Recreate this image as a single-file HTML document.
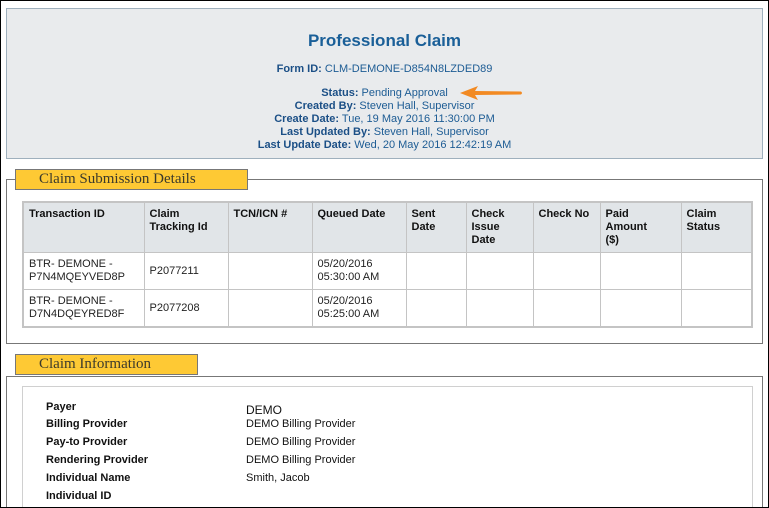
<!DOCTYPE html>
<html><head><meta charset="utf-8"><style>
*{margin:0;padding:0;box-sizing:border-box}
html,body{width:769px;height:508px;overflow:hidden;background:#fff}
body{font-family:"Liberation Sans",sans-serif;font-size:11px;position:relative}
.frame{position:absolute;left:0;top:0;width:769px;height:508px;border:1px solid #000;z-index:5;pointer-events:none}
.hdr{position:absolute;left:6px;top:8px;width:757px;height:151px;background:#e9ebed;border:1px solid #9fb0bd;color:#1d5c94;text-align:center}
.hdr h1{position:absolute;top:22px;width:100%;font-size:17px;font-weight:bold;color:#1a5f98}
.hdr .l{position:absolute;width:100%;line-height:13px}
.hdr b{color:#1b4f86}
.sec{position:absolute;left:6px;width:757px;border:1px solid #777;background:#fff}
.leg{position:absolute;background:#fec934;border:1px solid #777;font-family:"Liberation Serif",serif;font-size:15px;color:#3c3a2c;padding-left:23px;line-height:19px}
table{position:absolute;left:22px;top:201px;width:729px;table-layout:fixed;border-collapse:collapse;border:2px solid #c4c4c4}
td,th{border:1px solid #c4c4c4;vertical-align:top;text-align:left;padding:5px 5px;line-height:13px;color:#111;overflow:hidden}
th{background:#e1e5e8;font-weight:bold;height:49px}
td{height:37px;color:#222}
.ci{position:absolute;left:22px;top:386px;width:731px;height:130px;border:1px solid #d0d0d0}
.r{position:absolute;left:46px;font-weight:bold;color:#111}
.v{position:absolute;left:246px;color:#111}
</style></head><body>
<div class="frame"></div>
<div class="hdr">
<h1>Professional Claim</h1>
<div class="l" style="top:54px"><b>Form ID:</b> CLM-DEMONE-D854N8LZDED89</div>
<div class="l" style="top:78px"><b>Status:</b> Pending Approval</div>
<div class="l" style="top:91px"><b>Created By:</b> Steven Hall, Supervisor</div>
<div class="l" style="top:104px"><b>Create Date:</b> Tue, 19 May 2016 11:30:00 PM</div>
<div class="l" style="top:117px"><b>Last Updated By:</b> Steven Hall, Supervisor</div>
<div class="l" style="top:130px"><b>Last Update Date:</b> Wed, 20 May 2016 12:42:19 AM</div>
</div>
<svg style="position:absolute;left:458px;top:84px" width="68" height="18"><path d="M2 9 L20 2 L17 7 L63 7.5 Q65 9 63 10.5 L17 11 L20 16 Z" fill="#f28a23"/></svg>
<div class="sec" style="top:179px;height:165px"></div>
<div class="leg" style="left:15px;top:169px;width:233px;height:21px">Claim Submission Details</div>
<table>
<colgroup><col style="width:121px"><col style="width:84px"><col style="width:84px"><col style="width:94px"><col style="width:60px"><col style="width:67px"><col style="width:67px"><col style="width:81px"><col style="width:71px"></colgroup>
<tr><th>Transaction ID</th><th>Claim<br>Tracking Id</th><th>TCN/ICN #</th><th>Queued Date</th><th>Sent<br>Date</th><th>Check<br>Issue<br>Date</th><th>Check No</th><th>Paid<br>Amount<br>($)</th><th>Claim<br>Status</th></tr>
<tr><td>BTR- DEMONE -<br>P7N4MQEYVED8P</td><td style="vertical-align:middle">P2077211</td><td></td><td>05/20/2016<br>05:30:00 AM</td><td></td><td></td><td></td><td></td><td></td></tr>
<tr><td>BTR- DEMONE -<br>D7N4DQEYRED8F</td><td style="vertical-align:middle">P2077208</td><td></td><td>05/20/2016<br>05:25:00 AM</td><td></td><td></td><td></td><td></td><td></td></tr>
</table>
<div class="sec" style="top:376px;height:140px"></div>
<div class="leg" style="left:15px;top:354px;width:183px;height:21px">Claim Information</div>
<div class="ci"></div>
<div class="r" style="top:401px">Payer</div><div class="v" style="top:403px;font-size:12px">DEMO</div>
<div class="r" style="top:418px">Billing Provider</div><div class="v" style="top:418px">DEMO Billing Provider</div>
<div class="r" style="top:436px">Pay-to Provider</div><div class="v" style="top:436px">DEMO Billing Provider</div>
<div class="r" style="top:454px">Rendering Provider</div><div class="v" style="top:454px">DEMO Billing Provider</div>
<div class="r" style="top:472px">Individual Name</div><div class="v" style="top:472px">Smith, Jacob</div>
<div class="r" style="top:490px">Individual ID</div>
</body></html>
